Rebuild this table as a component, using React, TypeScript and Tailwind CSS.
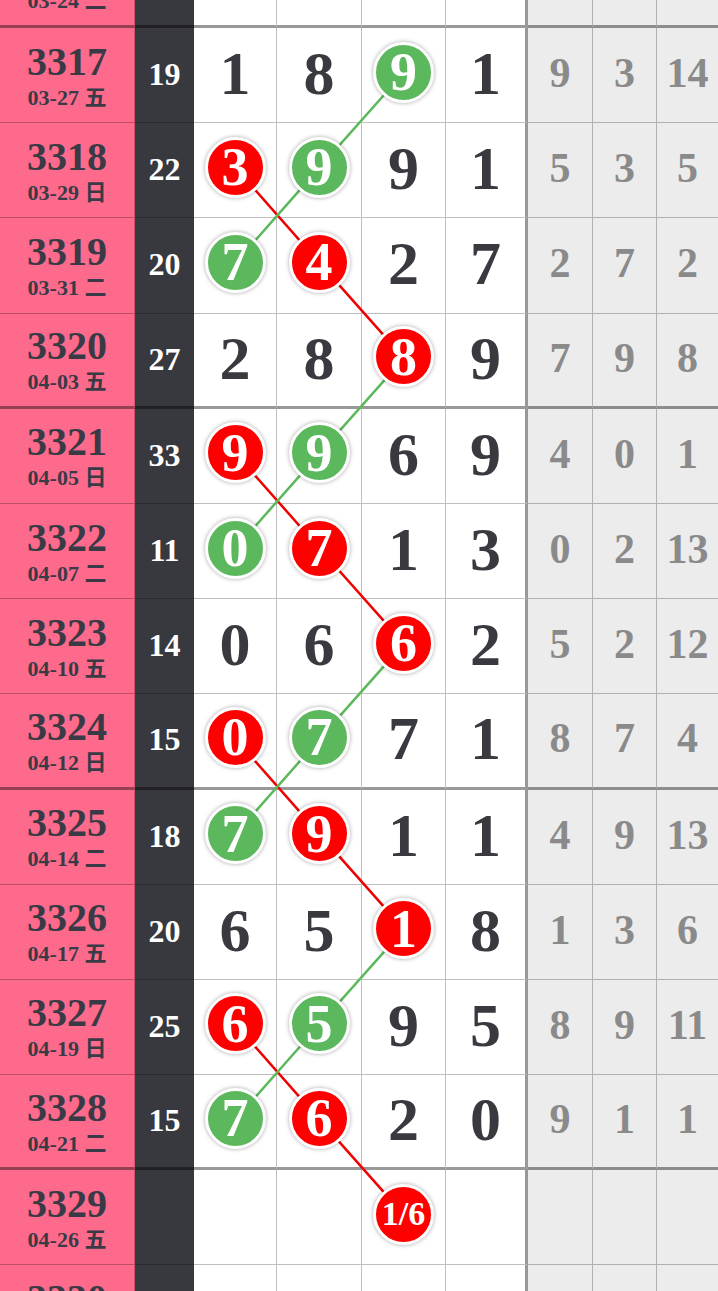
type Mark = "r" | "g" | null;

type Row = {
  id: string;
  date: string;
  sum: string;
  nums: string[];
  marks: Mark[];
  gray: string[];
};

const rows: Row[] = [
  { id: "3317", date: "03-27 五", sum: "19", nums: ["1", "8", "9", "1"], marks: [null, null, "g", null], gray: ["9", "3", "14"] },
  { id: "3318", date: "03-29 日", sum: "22", nums: ["3", "9", "9", "1"], marks: ["r", "g", null, null], gray: ["5", "3", "5"] },
  { id: "3319", date: "03-31 二", sum: "20", nums: ["7", "4", "2", "7"], marks: ["g", "r", null, null], gray: ["2", "7", "2"] },
  { id: "3320", date: "04-03 五", sum: "27", nums: ["2", "8", "8", "9"], marks: [null, null, "r", null], gray: ["7", "9", "8"] },
  { id: "3321", date: "04-05 日", sum: "33", nums: ["9", "9", "6", "9"], marks: ["r", "g", null, null], gray: ["4", "0", "1"] },
  { id: "3322", date: "04-07 二", sum: "11", nums: ["0", "7", "1", "3"], marks: ["g", "r", null, null], gray: ["0", "2", "13"] },
  { id: "3323", date: "04-10 五", sum: "14", nums: ["0", "6", "6", "2"], marks: [null, null, "r", null], gray: ["5", "2", "12"] },
  { id: "3324", date: "04-12 日", sum: "15", nums: ["0", "7", "7", "1"], marks: ["r", "g", null, null], gray: ["8", "7", "4"] },
  { id: "3325", date: "04-14 二", sum: "18", nums: ["7", "9", "1", "1"], marks: ["g", "r", null, null], gray: ["4", "9", "13"] },
  { id: "3326", date: "04-17 五", sum: "20", nums: ["6", "5", "1", "8"], marks: [null, null, "r", null], gray: ["1", "3", "6"] },
  { id: "3327", date: "04-19 日", sum: "25", nums: ["6", "5", "9", "5"], marks: ["r", "g", null, null], gray: ["8", "9", "11"] },
  { id: "3328", date: "04-21 二", sum: "15", nums: ["7", "6", "2", "0"], marks: ["g", "r", null, null], gray: ["9", "1", "1"] },
  { id: "3329", date: "04-26 五", sum: "", nums: ["", "", "1/6", ""], marks: [null, null, "r", null], gray: ["", "", ""] },
];

// centres of the three trend columns, and row centre from row index (3317 = 0)
const colX = [235.5, 319.5, 404];
const rowY = (i: number) => 28 + 95.2 * i + 44.5;

const redLines = [
  [[1, 0], [2, 1], [3, 2]],
  [[4, 0], [5, 1], [6, 2]],
  [[7, 0], [8, 1], [9, 2]],
  [[10, 0], [11, 1], [12, 2]],
];
const greenLines = [
  [[0, 2], [1, 1], [2, 0]],
  [[3, 2], [4, 1], [5, 0]],
  [[6, 2], [7, 1], [8, 0]],
  [[9, 2], [10, 1], [11, 0]],
];

const gridCols = "grid grid-cols-[135px_59px_83px_85px_84px_82px_65px_64px_61px] h-[95.2px]";

function Ball({ value, mark }: { value: string; mark: "r" | "g" }) {
  const small = value.length > 1;
  return (
    <div
      className={`relative z-20 flex items-center justify-center w-[61px] h-[61px] -mt-[6px] rounded-full border-[3px] border-white text-white font-bold leading-none shadow-[0_0_4px_rgba(0,0,0,0.35)] ${
        mark === "r" ? "bg-[#ff0000]" : "bg-[#5cb85c]"
      } ${small ? "text-[34px]" : "text-[54px]"}`}
    >
      {value}
    </div>
  );
}

function TableRow({ row, thick, className = "" }: { row: Row; thick: boolean; className?: string }) {
  const b = thick ? "border-b-[3px] border-b-black/40" : "border-b border-b-black/25";
  return (
    <div className={`${gridCols} ${className}`}>
      <div className={`flex flex-col items-center justify-center bg-[#fe6a8b] text-[#3a3a46] border-r border-r-black/20 ${b}`}>
        <div className="text-[40px] font-bold leading-none">{row.id}</div>
        <div className="text-[22px] font-bold leading-none mt-[5px]">{row.date}</div>
      </div>
      <div className={`flex items-center justify-center bg-[#38383f] text-white text-[32px] font-bold ${b}`}>
        <span className="-mt-[2px]">{row.sum}</span>
      </div>
      {row.nums.map((n, i) => {
        const mark = row.marks[i];
        return (
          <div
            key={i}
            className={`flex items-center justify-center bg-white ${
              i === 3 ? "border-r-[3px] border-r-black/40" : "border-r border-r-black/25"
            } ${b}`}
          >
            {mark ? (
              <Ball value={n} mark={mark} />
            ) : (
              <span className="-mt-[4px] text-[62px] font-bold leading-none text-[#393940]">{n}</span>
            )}
          </div>
        );
      })}
      {row.gray.map((g, i) => (
        <div
          key={i}
          className={`flex items-center justify-center bg-[#ececec] text-[42px] font-bold text-[#8a8a8a] ${
            i < 2 ? "border-r border-r-black/25" : ""
          } ${b}`}
        >
          <span className="-mt-[3px]">{g}</span>
        </div>
      ))}
    </div>
  );
}

export default function App() {
  const top: Row = { id: "3316", date: "03-24 二", sum: "", nums: ["", "", "", ""], marks: [null, null, null, null], gray: ["", "", ""] };
  const bottom: Row = { id: "3330", date: "04-28 日", sum: "", nums: ["", "", "", ""], marks: [null, null, null, null], gray: ["", "", ""] };

  return (
    <div className="relative w-[718px] h-[1291px] overflow-hidden bg-white font-['Liberation_Serif','Noto_Sans_CJK_SC',serif]">
      <TableRow row={top} thick className="-mt-[67.2px]" />
      {rows.map((r, i) => (
        <TableRow key={r.id} row={r} thick={i % 4 === 3} />
      ))}
      <TableRow row={bottom} thick={false} />

      {/* trend lines */}
      <svg className="absolute top-0 left-0 z-10 pointer-events-none" width={718} height={1291}>
        {redLines.map((seg, k) => (
          <polyline
            key={`r${k}`}
            points={seg.map(([ri, ci]) => `${colX[ci]},${rowY(ri)}`).join(" ")}
            fill="none"
            stroke="#f00000"
            strokeWidth={2.5}
          />
        ))}
        {greenLines.map((seg, k) => (
          <polyline
            key={`g${k}`}
            points={seg.map(([ri, ci]) => `${colX[ci]},${rowY(ri)}`).join(" ")}
            fill="none"
            stroke="#5cb85c"
            strokeWidth={2.5}
          />
        ))}
      </svg>
    </div>
  );
}
